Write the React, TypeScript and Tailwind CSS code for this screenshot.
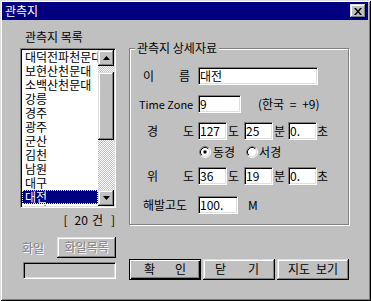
import React from "react";

const raised =
  "shadow-[inset_-1px_-1px_0_#000,inset_1px_1px_0_#dfdfdf,inset_-2px_-2px_0_#808080,inset_2px_2px_0_#fff]";
const sunken =
  "border border-t-[#808080] border-l-[#808080] border-r-white border-b-white shadow-[inset_1px_1px_0_#000,inset_-1px_-1px_0_#dfdfdf]";

function Field({ className, text }: { className: string; text: string }) {
  return (
    <div className={"h-[18px] bg-white pl-[1px] flex items-center whitespace-nowrap overflow-hidden " + sunken + " " + className}>
      <span className="leading-[14px]">{text}</span>
    </div>
  );
}

function Radio({ checked }: { checked: boolean }) {
  return (
    <svg width="12" height="12" viewBox="0 0 12 12" className="shrink-0">
      <circle cx="6" cy="6" r="4.2" fill="#fff" />
      <path d="M2.11 9.89 A5.5 5.5 0 0 1 9.89 2.11" fill="none" stroke="#808080" strokeWidth="1" />
      <path d="M9.89 2.11 A5.5 5.5 0 0 1 2.11 9.89" fill="none" stroke="#fff" strokeWidth="1" />
      <path d="M2.82 9.18 A4.5 4.5 0 0 1 9.18 2.82" fill="none" stroke="#000" strokeWidth="1" />
      <path d="M9.18 2.82 A4.5 4.5 0 0 1 2.82 9.18" fill="none" stroke="#dfdfdf" strokeWidth="1" />
      {checked && <rect x="4.5" y="4.5" width="3" height="3" rx="0.8" fill="#000" />}
    </svg>
  );
}

const items = [
  "대덕전파천문대",
  "보현산천문대",
  "소백산천문대",
  "강릉",
  "경주",
  "광주",
  "군산",
  "김천",
  "남원",
  "대구",
  "대전",
  "문경",
];

export default function App() {
  return (
    <div className="w-[371px] h-[301px] bg-[#c0c0c0] flex flex-col pt-[2px] pl-[2px] pr-[3px] overflow-hidden font-['Noto_Sans_CJK_KR','Noto_Sans',sans-serif] text-[12px] leading-[14px] text-black shadow-[inset_1px_1px_0_#dfdfdf,inset_-1px_-1px_0_#000,inset_2px_2px_0_#fff,inset_-2px_-2px_0_#808080]">
      {/* title bar */}
      <div className="h-[18px] bg-[#000080] flex items-center justify-between pl-[3px] pr-[2px] shrink-0">
        <span className="text-white text-[12px] leading-[14px]">관측지</span>
        <div className={"w-[16px] h-[14px] bg-[#c0c0c0] flex items-center justify-center " + raised}>
          <svg width="8" height="7" viewBox="0 0 8 7">
            <path d="M0 0H2L4 2.5L6 0H8L5 3.5L8 7H6L4 4.5L2 7H0L3 3.5Z" fill="#000" />
          </svg>
        </div>
      </div>

      <div className="flex pl-[18px]">
        {/* left column */}
        <div className="w-[96px] flex flex-col pt-[10px]">
          <div className="h-[18px] pl-[5px] leading-[14px] whitespace-nowrap">관측지 목록</div>
          <div className={"h-[160px] w-[96px] bg-white flex p-[1px] " + sunken}>
            <div className="flex-1 overflow-hidden flex flex-col">
              {items.map((it) =>
                it === "대전" ? (
                  <div
                    key={it}
                    className="h-[14px] shrink-0 bg-[#000080] text-white border border-dotted border-[#ffff80] pl-[2px] leading-[12px] whitespace-nowrap"
                  >
                    {it}
                  </div>
                ) : (
                  <div key={it} className="h-[14px] shrink-0 pl-[3px] leading-[14px] whitespace-nowrap">
                    {it}
                  </div>
                )
              )}
            </div>
            <div className="w-[16px] flex flex-col">
              <div className={"h-[16px] bg-[#c0c0c0] flex items-center justify-center " + raised}>
                <svg width="7" height="4" viewBox="0 0 7 4">
                  <path d="M0 4H7L3.5 0Z" fill="#000" />
                </svg>
              </div>
              <div className="h-[6px] bg-[repeating-conic-gradient(#c0c0c0_0_25%,#ffffff_0_50%)] bg-[length:2px_2px]" />
              <div className={"h-[68px] bg-[#c0c0c0] " + raised} />
              <div className="flex-1 bg-[repeating-conic-gradient(#c0c0c0_0_25%,#ffffff_0_50%)] bg-[length:2px_2px]" />
              <div className={"h-[16px] bg-[#c0c0c0] flex items-center justify-center " + raised}>
                <svg width="7" height="4" viewBox="0 0 7 4">
                  <path d="M0 0H7L3.5 4Z" fill="#000" />
                </svg>
              </div>
            </div>
          </div>
          <div className="mt-[5px] h-[14px] flex justify-end pr-[1px] leading-[14px]">
            <span>[</span>
            <span className="ml-[7px]">20</span>
            <span className="ml-[4px]">건</span>
            <span className="ml-[8px]">]</span>
          </div>
          <div className="mt-[10px] h-[21px] flex items-center">
            <span className="ml-[2px] text-[#808080] [text-shadow:1px_1px_0_#fff]">화일</span>
            <div className={"ml-auto w-[59px] h-[21px] bg-[#c0c0c0] flex items-center justify-center pb-[1px] " + raised}>
              <span className="text-[#808080] [text-shadow:1px_1px_0_#fff]">화일목록</span>
            </div>
          </div>
          <div className={"mt-[4px] ml-[3px] w-[93px] h-[17px] bg-[#c0c0c0] " + sunken} />
        </div>

        {/* right column */}
        <div className="ml-[13px] w-[221px] flex flex-col pt-[28px]">
          <div className="relative w-[220px] h-[177px] border border-[#808080] shadow-[inset_1px_1px_0_#fff,1px_1px_0_#fff] flex flex-col pt-[18px]">
            <span className="absolute left-[5px] -top-[8px] px-[2px] bg-[#c0c0c0] leading-[14px] whitespace-nowrap">관측지 상세자료</span>

            <div className="h-[18px] flex items-center">
              <div className="w-[68px] pl-[13px] pr-[8px] flex justify-between">
                <span>이</span>
                <span>름</span>
              </div>
              <Field className="w-[120px]" text="대전" />
            </div>

            <div className="mt-[10px] h-[18px] flex items-center">
              <div className="w-[68px] pl-[9px] whitespace-nowrap text-[11px]">Time Zone</div>
              <Field className="w-[43px]" text="9" />
              <span className="ml-[17px] whitespace-nowrap [word-spacing:3px]">(한국 = +9)</span>
            </div>

            <div className="mt-[9px] h-[18px] flex items-center">
              <div className="w-[68px] pl-[17px] pr-[4px] flex justify-between">
                <span>경</span>
                <span>도</span>
              </div>
              <Field className="w-[29px]" text="127" />
              <span className="ml-[1px]">도</span>
              <Field className="ml-[5px] w-[29px]" text="25" />
              <span className="ml-[1px]">분</span>
              <Field className="ml-[3px] w-[29px]" text="0." />
              <span>초</span>
            </div>

            <div className="mt-[4px] h-[16px] flex items-center pl-[69px]">
              <Radio checked />
              <span className="ml-[2px]">동경</span>
              <span className="ml-[11px] flex">
                <Radio checked={false} />
              </span>
              <span className="ml-[1px]">서경</span>
            </div>

            <div className="mt-[7px] h-[18px] flex items-center">
              <div className="w-[68px] pl-[17px] pr-[4px] flex justify-between">
                <span>위</span>
                <span>도</span>
              </div>
              <Field className="w-[29px]" text="36" />
              <span className="ml-[1px]">도</span>
              <Field className="ml-[5px] w-[29px]" text="19" />
              <span className="ml-[1px]">분</span>
              <Field className="ml-[3px] w-[29px]" text="0." />
              <span>초</span>
            </div>

            <div className="mt-[11px] h-[18px] flex items-center">
              <div className="w-[68px] pl-[13px] whitespace-nowrap">해발고도</div>
              <Field className="w-[40px]" text="100." />
              <span className="ml-[10px]">M</span>
            </div>
          </div>

          <div className="mt-[34px] flex gap-[2px]">
            <div className="w-[72px] h-[21px] bg-[#c0c0c0] border border-black shadow-[inset_1px_1px_0_#fff,inset_-1px_-1px_0_#000,inset_-2px_-2px_0_#808080] flex items-center justify-center gap-[20px] pb-[2px]">
              <span>확</span>
              <span>인</span>
            </div>
            <div className={"w-[72px] h-[21px] bg-[#c0c0c0] flex items-center justify-center gap-[22px] pb-[2px] pr-[4px] " + raised}>
              <span>닫</span>
              <span>기</span>
            </div>
            <div className={"w-[72px] h-[21px] bg-[#c0c0c0] flex items-center justify-center gap-[6px] pb-[2px] " + raised}>
              <span>지도</span>
              <span>보기</span>
            </div>
          </div>
        </div>
      </div>
    </div>
  );
}
